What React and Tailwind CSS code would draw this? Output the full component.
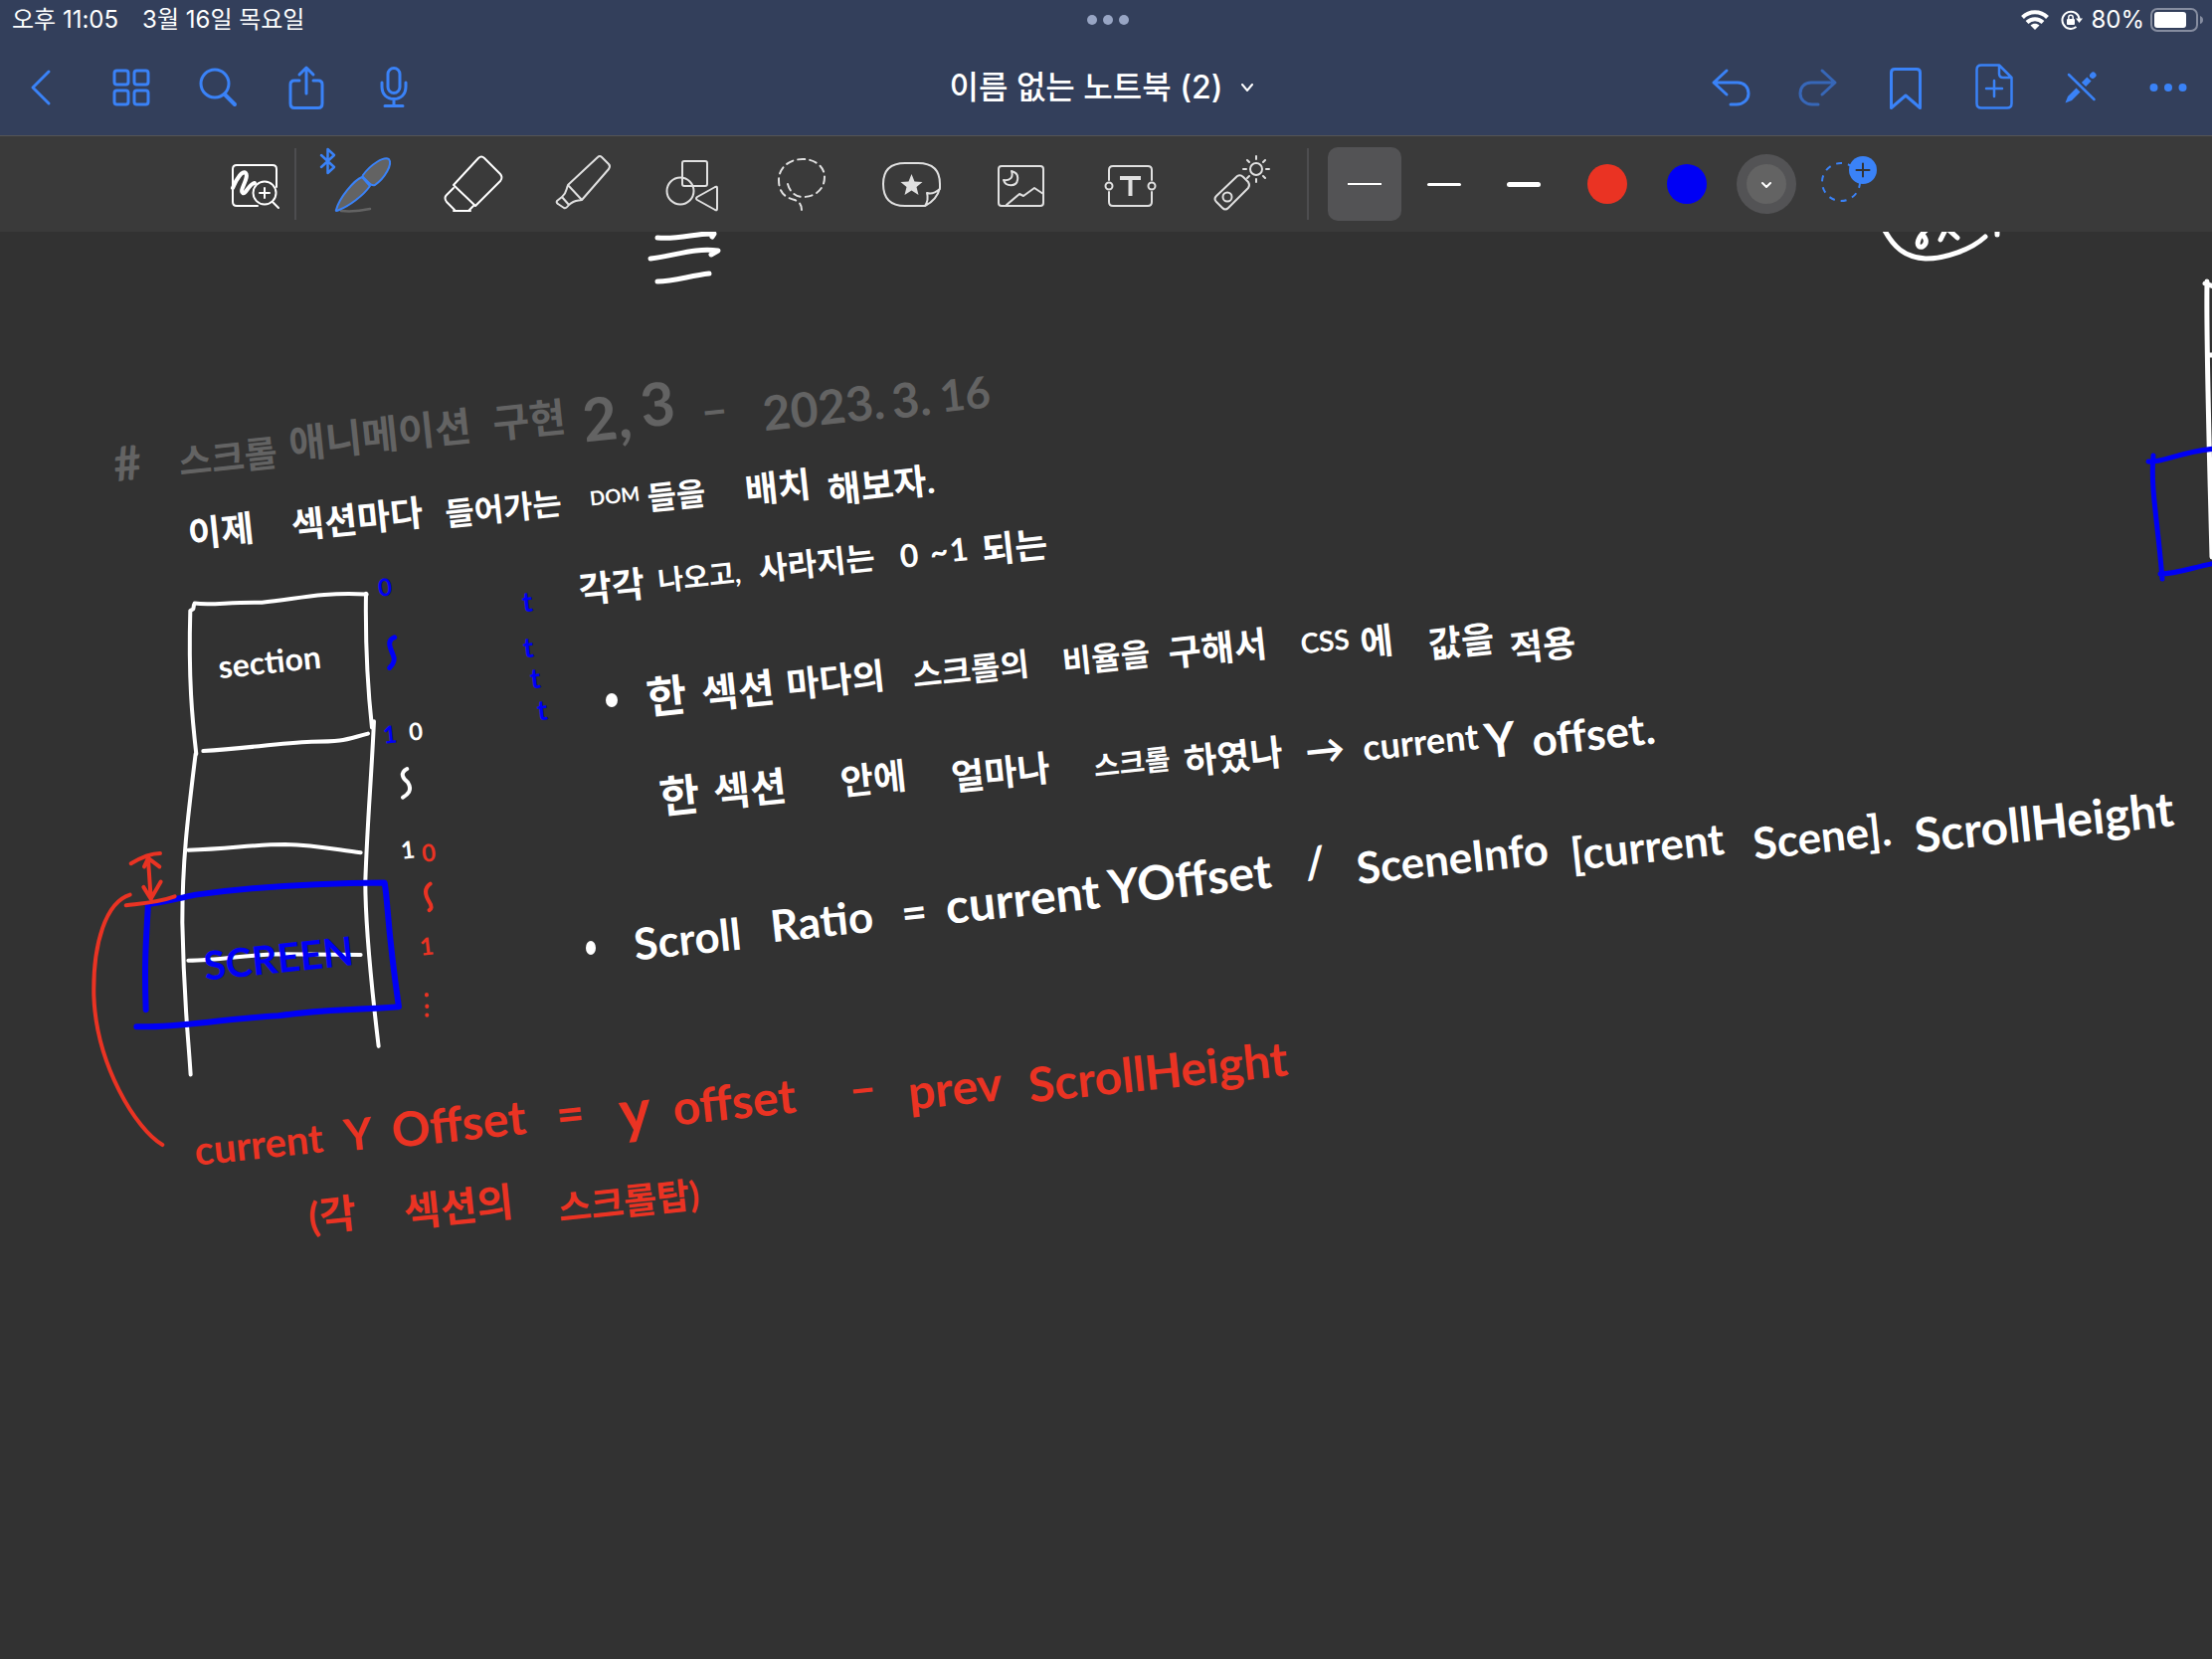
import React from "react";

const UI_FONT = "font-['Inter','Noto_Sans_CJK_KR',sans-serif]";
const INK_FONT = "font-['Lato','Noto_Sans_CJK_KR',sans-serif]";

const inkSizes = {
  20: "text-[20px]",
  24: "text-[24px]",
  28: "text-[28px]",
  32: "text-[32px]",
  36: "text-[36px]",
  40: "text-[40px]",
  44: "text-[44px]",
  48: "text-[48px]",
  60: "text-[60px]",
};

const inkColors = {
  gray: "text-[#636363]",
  white: "text-white",
  red: "text-[#ea3323]",
  blue: "text-[#0000f5]",
};

/* Words pinned on the note canvas: colour, size, then the words with their centres. */
const notes = [
  { color: "gray", size: 60, words: [["2,", 610, 186], ["3", 661, 172]] },
  { color: "gray", size: 48, words: [["#", 128, 232], ["–", 718, 178], ["2023.", 828, 176], ["3.", 916, 168]] },
  { color: "gray", size: 44, words: [["16", 970, 162]] },
  { color: "gray", size: 40, words: [["애니메이션", 382, 204], ["구현", 532, 189]] },
  { color: "gray", size: 36, words: [["스크롤", 229, 226]] },

  { color: "white", size: 36, words: [["이제", 222, 300], ["섹션마다", 359, 288], ["배치", 782, 256], ["해보자.", 886, 254]] },
  { color: "white", size: 32, words: [["들어가는", 506, 278], ["들을", 680, 265]] },
  { color: "white", size: 20, words: [["DOM", 618, 265]] },

  { color: "white", size: 36, words: [["각각", 615, 356], ["되는", 1020, 316]] },
  { color: "white", size: 32, words: [["사라지는", 821, 333], ["0", 914, 325], ["~", 944, 321], ["1", 964, 319]] },
  { color: "white", size: 28, words: [["나오고,", 703, 346]] },

  { color: "white", size: 44, words: [["한", 670, 466]] },
  { color: "white", size: 40, words: [["섹션", 742, 461]] },
  { color: "white", size: 36, words: [["마다의", 840, 450], ["구해서", 1224, 418], ["에", 1384, 411], ["값을", 1469, 411], ["적용", 1551, 415]] },
  { color: "white", size: 32, words: [["스크롤의", 976, 440], ["비율을", 1112, 428]] },
  { color: "white", size: 28, words: [["CSS", 1332, 411]] },

  { color: "white", size: 44, words: [["한", 683, 566], ["offset.", 1602, 504]] },
  { color: "white", size: 48, words: [["Y", 1508, 510]] },
  { color: "white", size: 40, words: [["섹션", 754, 560], ["→", 1332, 520]] },
  { color: "white", size: 36, words: [["안에", 878, 549], ["얼마나", 1006, 543], ["하였나", 1240, 527], ["current", 1428, 512]] },
  { color: "white", size: 28, words: [["스크롤", 1138, 533]] },

  { color: "white", size: 44, words: [["Scroll", 691, 710], ["Ratio", 826, 692], ["=", 919, 683]] },
  { color: "white", size: 48, words: [["current", 1028, 670], ["YOffset", 1196, 650]] },
  { color: "white", size: 44, words: [["/", 1322, 633], ["SceneInfo", 1460, 629], ["[current", 1656, 617], ["Scene].", 1832, 607]] },
  { color: "white", size: 48, words: [["ScrollHeight", 2055, 593]] },

  { color: "red", size: 40, words: [["current", 260, 917]] },
  { color: "red", size: 44, words: [["Y", 360, 906]] },
  { color: "red", size: 48, words: [["Offset", 461, 896], ["=", 573, 886], ["offset", 738, 874], ["–", 867, 860], ["prev", 960, 860]] },
  { color: "red", size: 60, words: [["y", 638, 882]] },
  { color: "red", size: 48, words: [["ScrollHeight", 1164, 844]] },
  { color: "red", size: 40, words: [["(각", 334, 988], ["섹션의", 461, 980]] },
  { color: "red", size: 36, words: [["스크롤탑)", 632, 974]] },

  { color: "white", size: 32, words: [["section", 271, 432]] },
  { color: "blue", size: 40, words: [["SCREEN", 280, 730]] },
  { color: "blue", size: 28, words: [["t", 530, 371], ["t", 531, 417], ["t", 538, 448], ["t", 545, 480]] },
  { color: "blue", size: 24, words: [["0", 387, 357], ["1", 392, 505]] },
  { color: "white", size: 24, words: [["0", 418, 502], ["1", 410, 621]] },
  { color: "red", size: 24, words: [["0", 431, 624], ["1", 429, 718]] },
];

function Words() {
  return notes.map((n, i) =>
    n.words.map(([t, x, y]) => (
      <span
        key={i + t + x + y}
        className={`absolute -translate-x-1/2 -translate-y-1/2 -rotate-6 whitespace-nowrap leading-none font-bold ${INK_FONT} ${inkSizes[n.size]} ${inkColors[n.color]}`}
        style={{ left: x, top: y }}
      >
        {t}
      </span>
    ))
  );
}

function Strokes() {
  return (
    <svg
      className="absolute left-0 top-0 h-[1435px] w-[2224px] max-w-none"
      viewBox="0 233 2224 1435"
      fill="none"
      strokeLinecap="round"
      strokeLinejoin="round"
      aria-hidden="true"
    >
      <g stroke="#fff" strokeWidth="5">
        <path d="M661 239C684 241 700 234 718 235L716 238" />
        <path d="M654 260C680 257 697 249 722 252L715 256" />
        <path d="M661 283C678 283 694 277 713 275" />
        <path d="M1893 228C1903 248 1915 259 1936 260C1956 260 1982 251 1996 238" />
        <path d="M1937 231C1926 240 1926 250 1933 248C1940 243 1934 237 1933 236M1951 241L1957 229L1968 239M2008 231V236" />
        <path d="M2219 283C2218 340 2220 400 2224 560M2217 285L2226 288M2220 357H2226" />
      </g>
      <g stroke="#0000f5" strokeWidth="5">
        <path d="M2160 464C2175 466 2190 454 2228 451M2165 458C2162 490 2169 520 2174 582M2172 577C2190 577 2205 570 2228 566" />
      </g>
      <g transform="translate(80 560) scale(0.3333 0.4082)">
        <g stroke="#fff" strokeWidth="4">
          <path vectorEffect="non-scaling-stroke" d="M345 118L343 128L334 132C328 300 340 400 352 485" />
          <path vectorEffect="non-scaling-stroke" d="M347 114C400 120 450 110 550 112C650 105 720 86 866 92" />
          <path vectorEffect="non-scaling-stroke" d="M864 90C862 200 866 300 882 420M888 405C880 550 868 650 862 800C862 900 875 1020 902 1205" />
          <path vectorEffect="non-scaling-stroke" d="M350 485C325 650 310 750 310 900C315 1100 325 1150 335 1275" />
          <path vectorEffect="non-scaling-stroke" d="M373 478C500 472 600 458 700 455C800 455 800 450 870 435" />
          <path vectorEffect="non-scaling-stroke" d="M328 722C450 720 520 708 620 708C720 710 780 722 848 728" />
          <path vectorEffect="non-scaling-stroke" d="M328 994C420 994 500 980 600 978L848 980" />
          <path vectorEffect="non-scaling-stroke" d="M988 522C965 532 975 545 990 555C1005 575 990 585 975 592" />
        </g>
        <g stroke="#0000f5" strokeWidth="6">
          <path vectorEffect="non-scaling-stroke" d="M205 855C250 852 290 842 350 832C500 815 700 803 920 802C932 860 926 900 963 1108C800 1118 750 1112 600 1130C400 1140 300 1160 172 1157M207 855C200 950 195 1000 200 1115" />
          <path vectorEffect="non-scaling-stroke" strokeWidth="5" d="M950 198C930 205 932 215 945 240C955 255 945 265 935 273" />
        </g>
        <g stroke="#ea3323" strokeWidth="4">
          <path vectorEffect="non-scaling-stroke" d="M155 755C190 738 215 730 243 730M207 745L215 840M195 763L207 742L241 763M193 813L215 842L245 800M140 858C200 852 240 850 287 836" />
          <path vectorEffect="non-scaling-stroke" d="M152 832C80 850 40 950 43 1080C50 1250 170 1410 250 1448" />
          <path vectorEffect="non-scaling-stroke" d="M1058 805C1040 815 1040 830 1055 850C1065 862 1060 868 1055 870M1047 1078V1079M1048 1106V1107M1048 1128V1129" />
        </g>
      </g>
      <g fill="#fff">
        <ellipse cx="615" cy="704" rx="6" ry="7" />
        <ellipse cx="594" cy="953" rx="5" ry="7" />
      </g>
    </svg>
  );
}

function NavButton({ label, children, dim }) {
  return (
    <button aria-label={label} className="flex h-24 w-[88px] items-center justify-center text-[#3a82f7]">
      <svg
        className={dim ? "size-12 opacity-60" : "size-12"}
        viewBox="0 0 48 48"
        fill="none"
        stroke="currentColor"
        strokeWidth="3"
        strokeLinecap="round"
        strokeLinejoin="round"
        overflow="visible"
      >
        {children}
      </svg>
    </button>
  );
}

function Tool({ label, children, width = "w-full", tone = "text-[#e0e0e0]" }) {
  return (
    <button aria-label={label} className={`flex h-24 items-center justify-center ${width} ${tone}`}>
      <svg
        className="size-20 shrink-0"
        viewBox="0 0 80 80"
        fill="none"
        stroke="currentColor"
        strokeWidth="2"
        strokeLinecap="round"
        strokeLinejoin="round"
        overflow="visible"
      >
        {children}
      </svg>
    </button>
  );
}

function StatusBar() {
  return (
    <div className="grid h-10 grid-cols-3 items-center pl-3 pr-2 text-[24px] leading-none text-white">
      <div className="flex gap-6">
        <span>오후 11:05</span>
        <span>3월 16일 목요일</span>
      </div>
      <div className="flex justify-center gap-[6px]">
        <span className="size-[10px] rounded-full bg-[#98a5c4]" />
        <span className="size-[10px] rounded-full bg-[#98a5c4]" />
        <span className="size-[10px] rounded-full bg-[#98a5c4]" />
      </div>
      <div className="flex items-center justify-end">
        <svg className="mr-3 h-5 w-7" viewBox="0 0 28 20" fill="none" stroke="#fff" strokeWidth="4">
          <path d="M1.5 7.5C8.5 .5 19.5 .5 26.5 7.5M6 12.5C10.5 8 17.5 8 22 12.5" />
          <path d="M14 20L9.5 15.5C12 13 16 13 18.5 15.5Z" fill="#fff" stroke="none" />
        </svg>
        <svg className="mr-2 h-5 w-[22px]" viewBox="0 0 22 20" fill="none" stroke="#fff" strokeWidth="2">
          <path d="M15.5 17A8.6 8.6 0 1 1 18.6 9" />
          <path d="M15 8.5H22L18.5 13Z" fill="#fff" stroke="none" />
          <rect x="6" y="9" width="8" height="6" rx="1" fill="#fff" stroke="none" />
          <path d="M7.8 9V7.5A2.2 2.2 0 0 1 12.2 7.5V9" strokeWidth="1.5" />
        </svg>
        <span className="mr-[6px]">80%</span>
        <svg className="h-6 w-[54px]" viewBox="0 0 54 24" fill="none">
          <rect x="1" y="1" width="46" height="22" rx="6" stroke="#868da0" strokeWidth="2" />
          <rect x="4" y="4" width="32" height="16" rx="3" fill="#fff" />
          <path d="M50 8Q53 9 53 12Q53 15 50 16Z" fill="#868da0" />
        </svg>
      </div>
    </div>
  );
}

function NavBar() {
  return (
    <div className="grid h-24 grid-cols-[1fr_auto_1fr] items-center">
      <div className="flex">
        <NavButton label="뒤로">
          <path d="M29 8L13 24L29 40" />
        </NavButton>
        <NavButton label="썸네일">
          <rect x="7" y="7" width="14" height="14" rx="2.5" />
          <rect x="27" y="7" width="14" height="14" rx="2.5" />
          <rect x="7" y="27" width="14" height="14" rx="2.5" />
          <rect x="27" y="27" width="14" height="14" rx="2.5" />
        </NavButton>
        <NavButton label="검색">
          <circle cx="20" cy="20" r="14" />
          <path d="M30 31L40 41" strokeWidth="4" />
        </NavButton>
        <NavButton label="공유">
          <path d="M17 17H12Q8 17 8 21V40Q8 44.5 12 44.5H36Q40 44.5 40 40V21Q40 17 36 17H31M24 30V4M17 11L24 4L31 11" />
        </NavButton>
        <NavButton label="녹음">
          <rect x="18" y="4.5" width="12" height="25" rx="6" />
          <path d="M12 19V23C12 31 17 35.5 24 35.5S36 31 36 23V19M24 36V42M15 42.5H33" />
        </NavButton>
      </div>
      <button className="flex items-center gap-[18px] pr-2.5 text-[32px] font-medium leading-none text-white">
        <span>이름 없는 노트북 (2)</span>
        <svg className="h-2 w-3" viewBox="0 0 12 8" fill="none" stroke="#fff" strokeWidth="2" strokeLinecap="round">
          <path d="M1 1L6 7L11 1" />
        </svg>
      </button>
      <div className="flex justify-end">
        <NavButton label="실행 취소">
          <path d="M20 7L7 19L20 31M7 19H31C38 19 42 24 42 30S37 41 30 41H24" />
        </NavButton>
        <NavButton label="다시 실행" dim>
          <path d="M28 7L41 19L28 31M41 19H17C10 19 6 24 6 30S11 41 18 41H24" />
        </NavButton>
        <NavButton label="책갈피">
          <path d="M9.5 44.5V9Q9.5 5.5 13 5.5H35Q38.5 5.5 38.5 9V44.5L24 32Z" />
        </NavButton>
        <NavButton label="페이지 추가">
          <path d="M12 1.5H30L42.5 14V40Q42.5 44.5 38 44.5H12Q7.5 44.5 7.5 40V6Q7.5 1.5 12 1.5ZM30 2V10Q30 14 34 14H42M25 17V33M17 25H33" strokeWidth="2.5" />
        </NavButton>
        <NavButton label="읽기 모드">
          <path d="M12 11L37.5 36" strokeWidth="2.5" />
          <path d="M8.5 39.5L11 33L19.5 24.5L23.5 28.5L15 37Z" fill="currentColor" stroke="none" />
          <path d="M27 21L32.5 15.5" strokeWidth="6" strokeLinecap="butt" />
          <path d="M36 12L36.5 11.5" strokeWidth="6" />
        </NavButton>
        <NavButton label="더 보기">
          <g fill="currentColor" stroke="none">
            <circle cx="9.5" cy="24" r="4" />
            <circle cx="24" cy="24" r="4" />
            <circle cx="38.5" cy="24" r="4" />
          </g>
        </NavButton>
      </div>
    </div>
  );
}

function Toolbar() {
  return (
    <div className="flex h-[97px] items-center border-t border-[#555] bg-[#3a3a3a] pl-[216px]">
      <Tool label="확대 창" width="w-20" tone="text-white">
        <path d="M62 43V25Q62 21 58 21H22Q18 21 18 25V58Q18 62 22 62H43" />
        <path d="M18 44C22 34 28 26 31 29C35 33 24 47 28 49C31 51 34 40 40 39" strokeWidth="4" />
        <circle cx="50" cy="49" r="11.5" />
        <path d="M50 44V54M45 49H55M58 58L64 64" />
      </Tool>
      <span className="h-[72px] w-0.5 bg-[#4d4d4f]" />
      <div className="ml-[10px] grid w-[995px] grid-cols-9">
        <Tool label="펜" tone="text-[#3a82f7]">
          <path d="M0 11L13 23L6.5 29V5L13 11L0 23" strokeWidth="2.5" />
          <path d="M20 67C30 68 40 67 49 65" stroke="#636363" strokeWidth="2.5" />
          <path d="M15 66C18 54 33 36 41 33L49 42C42 52 28 62 18 66Q14 68 15 66Z" fill="#636363" />
          <path d="M42 31C50 20 63 12 68 15C72 20 64 34 54 41Q51 42 48 39L43 34Q41 32 42 31Z" fill="#636363" />
        </Tool>
        <Tool label="지우개" tone="text-white">
          <path d="M22 41L47 14Q50 11 53 14L69 30Q72 33.5 69 37L44 62ZM22 44L15 51Q12 54 15 58L23 66M22 67H39M37 67L42 62" />
        </Tool>
        <Tool label="형광펜">
          <path d="M27 41L57 13Q59 11 61 13L68 20Q70 22 68 25L41 56ZM27 41C25 46 26 49 21 53L28 61C33 56 36 57 41 56M21 53L16 57Q15 59 17 60L23 64Q25 65 28 61" />
        </Tool>
        <Tool label="도형">
          <rect x="31" y="17" width="25" height="25" rx="2" />
          <circle cx="29" cy="47" r="13.5" />
          <path d="M66 44V65Q66 67 64 66L46 56Q44 54.5 46 53L64 43Q66 42 66 44Z" />
        </Tool>
        <Tool label="올가미">
          <path strokeDasharray="7 5" d="M27 40C29 48 35 53 42 53C55 53 64 45 64 33C64 22 54 15 42 15C28 15 18 24 18 36C18 50 26 54 34 56C39 58 41 61 41 66" />
        </Tool>
        <Tool label="스티커">
          <path d="M34 19H47Q69 19 69 40V44Q66 56 54 62H34Q12 62 12 40Q12 19 34 19ZM54 62Q58 56 56 49Q62 51 69 45" />
          <path d="M40.5 30L43.5 37.5L51.5 38L45.5 43L47.5 51L40.5 46.5L33.5 51L35.5 43L29.5 38L37.5 37.5Z" fill="currentColor" stroke="none" />
        </Tool>
        <Tool label="이미지">
          <rect x="17" y="22" width="45" height="40" rx="3" />
          <path d="M30 27C32 33 29 37 22 36C24 43 35 43 36 36C37 31 34 28 30 27ZM25 61L38 50L42 52L53 44L62 50" />
        </Tool>
        <Tool label="텍스트">
          <path d="M18 36V26Q18 22 22 22H57Q61 22 61 26V36M18 48V58Q18 62 22 62H57Q61 62 61 58V48" />
          <circle cx="18" cy="42" r="3.5" />
          <circle cx="61" cy="42" r="3.5" />
          <path d="M29 34H50M39.5 34V52" strokeWidth="4" strokeLinecap="butt" />
        </Tool>
        <Tool label="레이저 포인터">
          <path d="M36 32Q39 30 42 33L47 38Q49 41 47 44L27 64Q24 67 21 64L15 58Q12 55 15 52Z" />
          <circle cx="26" cy="53" r="4.5" />
          <circle cx="55" cy="25" r="6" />
          <path d="M55 12V15M55 35V38M42 25H45M65 25H68M46 16L48 18M62 32L64 34M64 16L62 18M46 34L48 32" />
        </Tool>
      </div>
      <span className="ml-[11px] h-[72px] w-0.5 bg-[#4d4d4f]" />
      <div className="ml-4 flex items-center">
        <div className="flex w-20 justify-center">
          <button aria-label="가는 획" className="flex size-[74px] items-center justify-center rounded-[10px] bg-[#535355]">
            <span className="h-0.5 w-[34px] bg-white" />
          </button>
        </div>
        <button aria-label="중간 획" className="flex h-[74px] w-20 items-center justify-center">
          <span className="h-[3px] w-[34px] rounded-full bg-white" />
        </button>
        <button aria-label="굵은 획" className="flex h-[74px] w-20 items-center justify-center">
          <span className="h-[5px] w-[34px] rounded-full bg-white" />
        </button>
      </div>
      <div className="ml-1 flex items-center">
        <button aria-label="빨강" className="flex h-[74px] w-20 items-center justify-center">
          <span className="size-10 rounded-full bg-[#ea3323]" />
        </button>
        <button aria-label="파랑" className="flex h-[74px] w-20 items-center justify-center">
          <span className="size-10 rounded-full bg-[#0000f5]" />
        </button>
        <button aria-label="회색" className="flex h-[74px] w-20 items-center justify-center">
          <span className="flex size-[60px] items-center justify-center rounded-full bg-[#535355]">
            <span className="flex size-10 items-center justify-center rounded-full bg-[#636363]">
              <svg className="h-2 w-3" viewBox="0 0 12 8" fill="none" stroke="#fff" strokeWidth="2" strokeLinecap="round">
                <path d="M2 3L6 7L10 3" />
              </svg>
            </span>
          </span>
        </button>
        <Tool label="색상 추가" width="w-20" tone="text-[#3a82f7]">
          <circle cx="35" cy="38" r="19" strokeDasharray="6 6" strokeLinecap="butt" />
          <circle cx="57" cy="26" r="14" fill="currentColor" stroke="none" />
          <path d="M57 19.5V32.5M50.5 26H63.5" stroke="#333" />
        </Tool>
      </div>
    </div>
  );
}

export default function App() {
  return (
    <div className={`flex min-h-screen flex-col overflow-hidden bg-[#323232] ${UI_FONT}`}>
      <header className="bg-[#333f5b]">
        <StatusBar />
        <NavBar />
        <Toolbar />
      </header>
      <main className="relative flex-1 overflow-hidden">
        <Strokes />
        <Words />
      </main>
    </div>
  );
}
